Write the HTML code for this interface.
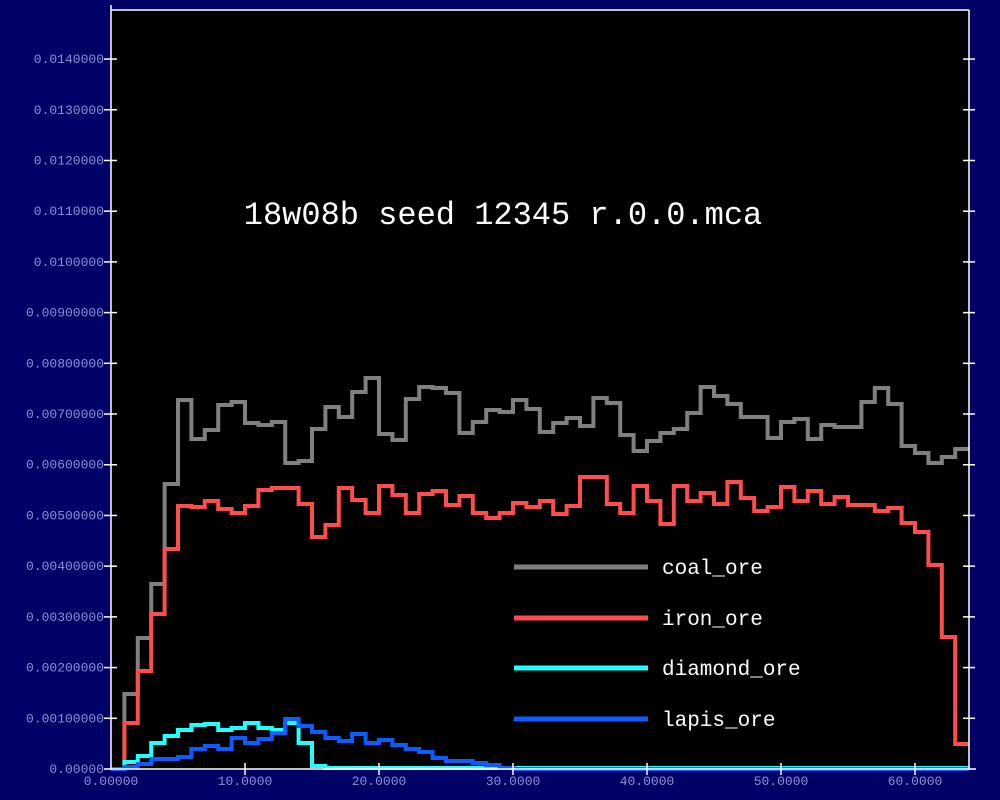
<!DOCTYPE html>
<html><head><meta charset="utf-8"><style>
html,body{margin:0;padding:0;background:#000066;}
svg{display:block}
text{font-family:"Liberation Mono",monospace;}
</style></head><body>
<svg id="s" width="1000" height="800" xmlns="http://www.w3.org/2000/svg">
<rect width="1000" height="800" fill="#000066"/>
<rect x="111" y="10" width="858" height="759" fill="#000"/>
<g id="data" fill="none" stroke-width="4" stroke-linejoin="miter"></g>
<g stroke="#fff" stroke-width="1.5" fill="none">
<line x1="111" y1="5" x2="111" y2="770"/>
<line x1="111" y1="10" x2="969" y2="10"/>
<line x1="969" y1="10" x2="969" y2="770"/>
<line x1="104" y1="769" x2="976" y2="769"/>
</g>
<g id="ticks" stroke="#fff" stroke-width="1.5"></g>
<g id="labels" fill="#8f8fd8" font-size="13"></g>
<text x="503" y="224" fill="#fff" font-size="32" text-anchor="middle">18w08b seed 12345 r.0.0.mca</text>
<g stroke-width="5">
<line x1="514" y1="567" x2="648" y2="567" stroke="#808080"/>
<line x1="514" y1="618" x2="648" y2="618" stroke="#ff4c4c"/>
<line x1="514" y1="668" x2="648" y2="668" stroke="#22ffff"/>
<line x1="514" y1="719" x2="648" y2="719" stroke="#0c5cff"/>
</g>
<g fill="#fff" font-size="21">
<text x="662" y="574">coal_ore</text>
<text x="662" y="625">iron_ore</text>
<text x="662" y="675">diamond_ore</text>
<text x="662" y="726">lapis_ore</text>
</g>
</svg>
<script>
var NS="http://www.w3.org/2000/svg";
function bx(i){return 111+13.4*i;}
function path(a,c){var d="M"+bx(0)+" "+a[0];for(var i=0;i<a.length;i++){if(i>0)d+=" V"+a[i];d+=" H"+bx(i+1).toFixed(1);}var p=document.createElementNS(NS,"path");p.setAttribute("d",d);p.setAttribute("stroke",c);document.getElementById("data").appendChild(p);}
var coal=[769,694,638,584,484,400,439,430,405,402,423,425,422,463,461,429,407,417,392,378,434,440,399,387,388,393,433,422,410,412,400,409,432,423,418,426,398,403,435,451,441,433,429,413,387,396,404,417,417,438,422,419,439,425,427,427,402,388,404,446,453,463,457,449];
var iron=[769,723,671,614,549,506,507,501,509,513,506,490,488,488,504,537,525,488,500,513,486,495,513,494,491,505,496,513,518,513,503,507,501,514,506,477,477,504,513,486,501,524,486,501,493,504,482,498,511,507,487,501,491,504,497,505,505,511,508,523,532,565,637,744];
var dia=[769,762,756,743,736,730,725,724,730,728,723,728,730,723,743,766];while(dia.length<64)dia.push(768);
var lap=[769,767,764,759,759,757,749,746,749,738,743,739,733,719,726,732,738,741,734,743,740,745,749,752,758,761,761,763,765,768];while(lap.length<64)lap.push(769);
path(coal,"#808080");path(iron,"#ff4c4c");path(dia,"#22ffff");path(lap,"#0c5cff");
var t=document.getElementById("ticks"),L=document.getElementById("labels");
function ln(x1,y1,x2,y2){var l=document.createElementNS(NS,"line");l.setAttribute("x1",x1);l.setAttribute("y1",y1);l.setAttribute("x2",x2);l.setAttribute("y2",y2);t.appendChild(l);}
function tx(x,y,s,a){var e=document.createElementNS(NS,"text");e.setAttribute("x",x);e.setAttribute("y",y);e.setAttribute("text-anchor",a);e.textContent=s;L.appendChild(e);}
var yl=["0.00000","0.00100000","0.00200000","0.00300000","0.00400000","0.00500000","0.00600000","0.00700000","0.00800000","0.00900000","0.0100000","0.0110000","0.0120000","0.0130000","0.0140000"];
for(var k=0;k<15;k++){var y=769-k*50.71;if(k>0){ln(104,y,117,y);ln(963,y,975,y);}tx(104,y+4,yl[k],"end");}
for(var k=0;k<7;k++){var x=111+134*k;if(k>0)ln(x,763,x,775);tx(x,785,k==0?"0.00000":(k*10)+".0000","middle");}
</script>
</body></html>
